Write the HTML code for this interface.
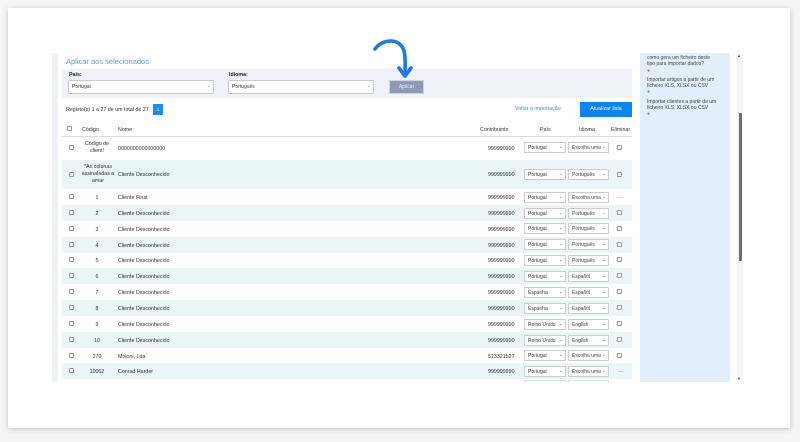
<!DOCTYPE html>
<html><head><meta charset="utf-8"><style>
*{box-sizing:border-box;margin:0;padding:0}
body{width:800px;height:442px;background:#f5f5f5;font-family:"Liberation Sans",sans-serif;font-size:5.3px;color:#333;position:relative;overflow:hidden}
.card{position:absolute;left:8px;top:8px;width:782px;height:420px;background:#fff;box-shadow:0 1px 5px rgba(0,0,0,.2)}
.a{position:absolute}
.strip{left:52px;top:53px;width:6px;height:329px;background:#f1f2f6}
.cb{position:absolute;width:5px;height:5px;border:0.5px solid #999;border-radius:1px;background:#fff}
.sel{position:absolute;height:11px;border:0.6px solid #ccc;border-radius:1px;background:#fff;padding-left:3px;line-height:10px;font-size:5px;color:#444}
.sel:after{content:"⌄";position:absolute;right:2px;top:-1px;font-size:5px;color:#777}
.row{position:absolute;left:62px;width:570px;height:16px}
.row.b{background:#eaf5f8}
.row span{position:absolute;top:1px;line-height:16px}
.row span.cb{line-height:normal}
</style></head><body>
<div class="card"></div>
<div class="a strip"></div>
<div class="a" style="left:66px;top:57px;font-size:7.5px;color:#5aa0e0">Aplicar aos selecionados</div>
<div class="a" style="left:62px;top:69px;width:570px;height:29px;background:#f0f2f7"></div>
<div class="a" style="left:69px;top:72px;font-size:5.3px;font-weight:bold;color:#222">País:</div>
<div class="sel" style="left:68px;top:80px;width:146px;height:14px;line-height:13px">Portugal</div>
<div class="a" style="left:229px;top:72px;font-size:5.3px;font-weight:bold;color:#222">Idioma:</div>
<div class="sel" style="left:228px;top:80px;width:146px;height:14px;line-height:13px">Português</div>
<div class="a" style="left:389px;top:80px;width:35px;height:14px;background:#8d9bb5;border:0.8px solid #cdd3df;color:#eef;text-align:center;line-height:13px;font-size:5px">Aplicar</div>
<svg class="a" style="left:370px;top:36px" width="50" height="44" viewBox="0 0 50 44"><path d="M5 13 C12 3 30 1 34 15 C36 23 35 30 35 38" fill="none" stroke="#1a7ce6" stroke-width="3.6" stroke-linecap="round"/><path d="M29 32 L35 40 L41 32" fill="none" stroke="#1a7ce6" stroke-width="3.6" stroke-linecap="round" stroke-linejoin="round"/></svg>
<div class="a" style="left:66px;top:107px">Registo(s) 1 a 27 de um total de 27</div>
<div class="a" style="left:153px;top:104px;width:10px;height:11px;background:#1a8cf0;color:#fff;text-align:center;line-height:11px;font-size:4.5px">1</div>
<div class="a" style="left:515px;top:106px;color:#3d8fe0">Voltar à importação</div>
<div class="a" style="left:580px;top:102px;width:52px;height:15px;background:#0a84f5;color:#fff;text-align:center;line-height:15px">Atualizar lista</div>
<div class="cb" style="left:67px;top:126px"></div>
<div class="a" style="left:82px;top:127px">Código</div>
<div class="a" style="left:118px;top:127px">Nome</div>
<div class="a" style="left:480px;top:127px">Contribuinte</div>
<div class="a" style="left:540px;top:127px">País</div>
<div class="a" style="left:579px;top:127px">Idioma</div>
<div class="a" style="left:611px;top:127px">Eliminar</div>
<div class="a" style="left:62px;top:136px;width:570px;height:0.6px;background:#ddd"></div>
<div class="row" style="top:137px;height:22px"><span class="cb" style="left:7px;top:8px"></span><span style="left:22px;width:26px;text-align:center;line-height:7px;top:4px">Código de client!</span><span style="left:56px;line-height:22px">0000000000000000</span><span style="left:426px;line-height:22px">999999990</span><div class="sel" style="left:462px;top:5px;width:42px">Portugal</div><div class="sel" style="left:506px;top:5px;width:41px">Escolha uma</div><span class="cb" style="left:555px;top:8px"></span></div>
<div class="row b" style="top:160px;height:29px"><span class="cb" style="left:7px;top:12px"></span><span style="left:18px;width:36px;text-align:center;line-height:7px;top:4px">*As colunas assinaladas a amar</span><span style="left:56px;line-height:29px">Cliente Desconhecido</span><span style="left:426px;line-height:29px">999999990</span><div class="sel" style="left:462px;top:9px;width:42px">Portugal</div><div class="sel" style="left:506px;top:9px;width:41px">Português</div><span class="cb" style="left:555px;top:12px"></span></div>

<div class="row" style="top:189px"><span class="cb" style="left:7px;top:5px"></span><span style="left:22px;width:26px;text-align:center">1</span><span style="left:56px">Cliente Final</span><span style="left:426px">999999990</span><div class="sel" style="left:462px;top:2.5px;width:42px">Portugal</div><div class="sel" style="left:506px;top:2.5px;width:41px">Escolha uma</div><span style="left:556px;color:#999">—</span></div>
<div class="row b" style="top:205px"><span class="cb" style="left:7px;top:5px"></span><span style="left:22px;width:26px;text-align:center">2</span><span style="left:56px">Cliente Desconhecido</span><span style="left:426px">999999990</span><div class="sel" style="left:462px;top:2.5px;width:42px">Portugal</div><div class="sel" style="left:506px;top:2.5px;width:41px">Português</div><span class="cb" style="left:555px;top:5px"></span></div>
<div class="row" style="top:220.5px"><span class="cb" style="left:7px;top:5px"></span><span style="left:22px;width:26px;text-align:center">3</span><span style="left:56px">Cliente Desconhecido</span><span style="left:426px">999999990</span><div class="sel" style="left:462px;top:2.5px;width:42px">Portugal</div><div class="sel" style="left:506px;top:2.5px;width:41px">Português</div><span class="cb" style="left:555px;top:5px"></span></div>
<div class="row b" style="top:236.5px"><span class="cb" style="left:7px;top:5px"></span><span style="left:22px;width:26px;text-align:center">4</span><span style="left:56px">Cliente Desconhecido</span><span style="left:426px">999999990</span><div class="sel" style="left:462px;top:2.5px;width:42px">Portugal</div><div class="sel" style="left:506px;top:2.5px;width:41px">Português</div><span class="cb" style="left:555px;top:5px"></span></div>
<div class="row" style="top:252px"><span class="cb" style="left:7px;top:5px"></span><span style="left:22px;width:26px;text-align:center">5</span><span style="left:56px">Cliente Desconhecido</span><span style="left:426px">999999990</span><div class="sel" style="left:462px;top:2.5px;width:42px">Portugal</div><div class="sel" style="left:506px;top:2.5px;width:41px">Português</div><span class="cb" style="left:555px;top:5px"></span></div>
<div class="row b" style="top:268px"><span class="cb" style="left:7px;top:5px"></span><span style="left:22px;width:26px;text-align:center">6</span><span style="left:56px">Cliente Desconhecido</span><span style="left:426px">999999990</span><div class="sel" style="left:462px;top:2.5px;width:42px">Portugal</div><div class="sel" style="left:506px;top:2.5px;width:41px">Español</div><span class="cb" style="left:555px;top:5px"></span></div>
<div class="row" style="top:284px"><span class="cb" style="left:7px;top:5px"></span><span style="left:22px;width:26px;text-align:center">7</span><span style="left:56px">Cliente Desconhecido</span><span style="left:426px">999999990</span><div class="sel" style="left:462px;top:2.5px;width:42px">Espanha</div><div class="sel" style="left:506px;top:2.5px;width:41px">Español</div><span class="cb" style="left:555px;top:5px"></span></div>
<div class="row b" style="top:300px"><span class="cb" style="left:7px;top:5px"></span><span style="left:22px;width:26px;text-align:center">8</span><span style="left:56px">Cliente Desconhecido</span><span style="left:426px">999999990</span><div class="sel" style="left:462px;top:2.5px;width:42px">Espanha</div><div class="sel" style="left:506px;top:2.5px;width:41px">Español</div><span class="cb" style="left:555px;top:5px"></span></div>
<div class="row" style="top:316px"><span class="cb" style="left:7px;top:5px"></span><span style="left:22px;width:26px;text-align:center">9</span><span style="left:56px">Cliente Desconhecido</span><span style="left:426px">999999990</span><div class="sel" style="left:462px;top:2.5px;width:42px">Reino Unido</div><div class="sel" style="left:506px;top:2.5px;width:41px">English</div><span class="cb" style="left:555px;top:5px"></span></div>
<div class="row b" style="top:332px"><span class="cb" style="left:7px;top:5px"></span><span style="left:22px;width:26px;text-align:center">10</span><span style="left:56px">Cliente Desconhecido</span><span style="left:426px">999999990</span><div class="sel" style="left:462px;top:2.5px;width:42px">Reino Unido</div><div class="sel" style="left:506px;top:2.5px;width:41px">English</div><span class="cb" style="left:555px;top:5px"></span></div>
<div class="row" style="top:347.5px"><span class="cb" style="left:7px;top:5px"></span><span style="left:22px;width:26px;text-align:center">270</span><span style="left:56px">Moloni, Lda</span><span style="left:426px">513321527</span><div class="sel" style="left:462px;top:2.5px;width:42px">Portugal</div><div class="sel" style="left:506px;top:2.5px;width:41px">Escolha uma</div><span class="cb" style="left:555px;top:5px"></span></div>
<div class="row b" style="top:363px"><span class="cb" style="left:7px;top:5px"></span><span style="left:22px;width:26px;text-align:center">10002</span><span style="left:56px">Conrad Harder</span><span style="left:426px">999999990</span><div class="sel" style="left:462px;top:2.5px;width:42px">Portugal</div><div class="sel" style="left:506px;top:2.5px;width:41px">Escolha uma</div><span style="left:556px;color:#999">—</span></div>
<div class="a" style="left:524px;top:380px;width:42px;height:2px;border:0.6px solid #ddd;border-bottom:0"></div>
<div class="a" style="left:568px;top:380px;width:41px;height:2px;border:0.6px solid #ddd;border-bottom:0"></div>

<div class="a" style="left:640px;top:53px;width:90px;height:329px;background:#e3eefc"></div>
<div class="a" style="left:647px;top:55px;width:70px;font-size:5px;line-height:6.3px;color:#444">como gera um ficheiro deste tipo para importar dados?<br><span style="color:#4a90e2">●</span><br><div style="height:3px"></div>Importar artigos a partir de um ficheiro XLS, XLSX ou CSV<br><span style="color:#4a90e2">●</span><br><div style="height:3px"></div>Importar clientes a partir de um ficheiro XLS, XLSX ou CSV<br><span style="color:#4a90e2">●</span></div>
<div class="a" style="left:737px;top:53px;width:6px;height:329px;background:#f6f6f6"></div>
<div class="a" style="left:738.5px;top:113px;width:3px;height:148px;background:#6e6e6e;border-radius:1px"></div>
<div class="a" style="left:737px;top:53px;font-size:4px;color:#555">▲</div>
<div class="a" style="left:737px;top:376px;font-size:4px;color:#555">▼</div>
</body></html>
